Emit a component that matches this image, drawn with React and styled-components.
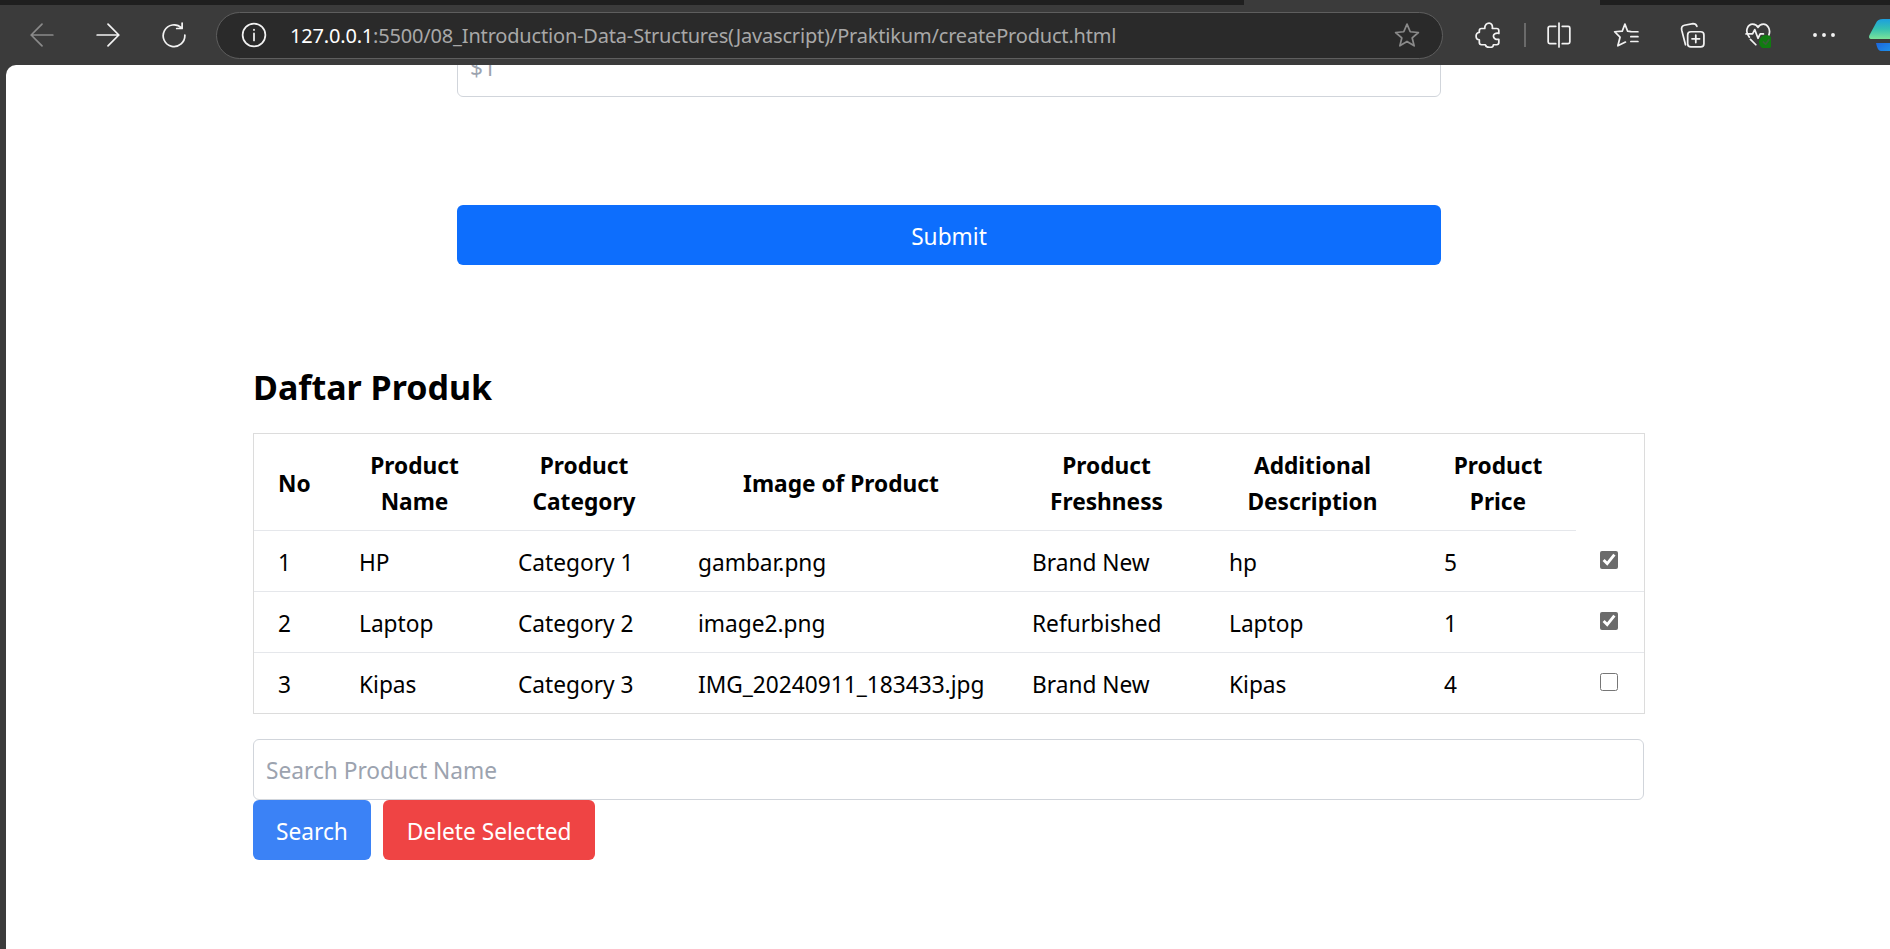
import styled, { createGlobalStyle } from "styled-components";

const GlobalStyle = createGlobalStyle`
  html, body {
    margin: 0;
    height: 100%;
    overflow: hidden;
    background: #3b3b3b;
  }
`;

const products = [
  { no: 1, name: "HP", category: "Category 1", image: "gambar.png", freshness: "Brand New", description: "hp", price: 5, checked: true },
  { no: 2, name: "Laptop", category: "Category 2", image: "image2.png", freshness: "Refurbished", description: "Laptop", price: 1, checked: true },
  { no: 3, name: "Kipas", category: "Category 3", image: "IMG_20240911_183433.jpg", freshness: "Brand New", description: "Kipas", price: 4, checked: false },
];

const columns = [81, 159, 180, 334, 197, 215, 156, 68];

// Browser frame
const Window = styled.div`
  height: 949px;
  display: flex;
  flex-direction: column;
  font-family: "Noto Sans", "Open Sans", sans-serif;
`;

const TabStrip = styled.div`
  height: 5px;
  display: flex;
  background: #1f1f1f;
`;

const ActiveTab = styled.div`
  width: 356px;
  margin-left: 1244px;
  background: #3b3b3b;
`;

const Toolbar = styled.div`
  height: 60px;
  display: flex;
  align-items: center;
  overflow: hidden;
  background: #3b3b3b;
  color: #fff;
`;

const NavIcon = styled.svg`
  width: 26px;
  height: 26px;
  flex: none;
  margin-left: ${(p) => p.$left || 0}px;
  fill: none;
  stroke: ${(p) => (p.$dim ? "#8a8a8a" : "#f2f2f2")};
  stroke-width: 1.6;
  stroke-linecap: round;
  stroke-linejoin: round;
`;

const AddressBar = styled.div`
  width: 1227px;
  height: 47px;
  box-sizing: border-box;
  margin-left: 29px;
  padding: 0 22px 0 24px;
  flex: none;
  display: flex;
  align-items: center;
  border: 1.5px solid #5e5e5e;
  border-radius: 24px;
  background: #2a2a2a;
`;

const Url = styled.span`
  flex: 1;
  margin-left: 23px;
  font-size: 20px;
  letter-spacing: -0.18px;
  white-space: nowrap;
  color: #a8a8a8;
  b {
    font-weight: 400;
    color: #fff;
  }
`;

const Divider = styled.div`
  width: 1.5px;
  height: 24px;
  margin-left: 23px;
  flex: none;
  background: #6a6a6a;
`;

const Badge = styled.circle`
  fill: #107c10;
  stroke: none;
`;

const Dot = styled.circle`
  fill: #f2f2f2;
  stroke: none;
`;

const Logo = styled.svg`
  width: 34px;
  height: 32px;
  flex: none;
  margin-left: 32px;
`;

// Page
const Page = styled.main`
  flex: 1;
  margin-left: 6px;
  overflow: hidden;
  background: #fff;
  border-top-left-radius: 10px;
`;

const Form = styled.section`
  width: 984px;
  margin: -29px 0 0 451px;
`;

const Input = styled.input`
  display: block;
  width: 100%;
  height: 61px;
  box-sizing: border-box;
  padding: 2px 12px 0;
  border: 1.5px solid #d1d5db;
  border-radius: 6px;
  background: #fff;
  font: inherit;
  font-size: 22.7px;
  &::placeholder {
    color: #9ca3af;
    opacity: 1;
  }
`;

const SubmitButton = styled.button`
  display: block;
  width: 100%;
  height: 60px;
  margin-top: 108px;
  padding: 2px 0 0;
  border: 0;
  border-radius: 6px;
  background: #0d6efd;
  color: #fff;
  font: inherit;
  font-size: 22.7px;
`;

const ProductSection = styled.section`
  width: 1391px;
  margin: 95px 0 0 247px;
`;

const Heading = styled.h2`
  margin: 0 0 19px;
  font-size: 34px;
  line-height: 54px;
  font-weight: 700;
  color: #000;
`;

const Table = styled.table`
  width: 100%;
  table-layout: fixed;
  border-collapse: separate;
  border-spacing: 0;
  border: 1.5px solid #dcdcdc;
  border-bottom-width: 1px;
  font-size: 22.7px;
  line-height: 36px;
  color: #000;
`;

const Th = styled.th`
  padding: 14px 24px 10px;
  border-bottom: 1.5px solid #e5e7eb;
  font-weight: 700;
  text-align: center;
  &:first-child {
    text-align: left;
  }
`;

const Td = styled.td`
  padding: 14px 24px 10px;
  border-bottom: 1.5px solid #e5e7eb;
  white-space: nowrap;
  tr:last-child & {
    border-bottom: 0;
  }
`;

const Checkbox = styled.input`
  display: block;
  width: 18px;
  height: 18px;
  margin: -6px 0 0 0;
  accent-color: #6b6b6b;
`;

const SearchInput = styled(Input)`
  margin-top: 25px;
`;

const Actions = styled.div`
  display: flex;
  gap: 12px;
`;

const ActionButton = styled.button`
  height: 60px;
  padding: 2px ${(p) => (p.$danger ? 24 : 23)}px 0;
  border: 0;
  border-radius: 6px;
  background: ${(p) => (p.$danger ? "#ef4444" : "#3b82f6")};
  color: #fff;
  font: inherit;
  font-size: 22.7px;
`;

function App() {
  return (
    <Window>
      <GlobalStyle />
      <TabStrip>
        <ActiveTab />
      </TabStrip>
      <Toolbar>
        <NavIcon $left={29} $dim viewBox="0 0 24 24">
          <path d="M22 12H2M12 2 2 12l10 10" />
        </NavIcon>
        <NavIcon $left={40} viewBox="0 0 24 24">
          <path d="M2 12h20M12 2l10 10-10 10" />
        </NavIcon>
        <NavIcon $left={40} viewBox="0 0 24 24">
          <path d="M19 5.500A10 10 0 1 0 22 12M19.500 1v5h-5" />
        </NavIcon>
        <AddressBar>
          <NavIcon viewBox="0 0 24 24">
            <circle cx="12" cy="12" r="10.500" />
            <path d="M12 10.500V17M12 7v.4" />
          </NavIcon>
          <Url>
            <b>127.0.0.1</b>:5500/08_Introduction-Data-Structures(Javascript)/Praktikum/createProduct.html
          </Url>
          <NavIcon $dim viewBox="0 0 24 24">
            <path d="m12 2 3 7 7.500.7-5.700 5 1.800 7.300-6.600-4-6.600 4L7.200 14.700l-5.700-5L9 9z" />
          </NavIcon>
        </AddressBar>
        <NavIcon $left={32} viewBox="0 0 24 24">
          <path d="M9 6C9 2.500 11 1 13 1c2 0 3.500 2 3 5h4c1 0 2 1 2 2v2.500c-3-.5-5 .5-5 2.500s2 3.500 5 3v3c0 1-1 2-2 2h-3c0 2-2 2.500-3.500 2.500S10 23 9.500 21H6c-1 0-2-1-2-2v-2.500C1.500 16.500 1 14.500 1 13s1-3.500 3-3.500V8c0-1 1-2 2-2z" />
        </NavIcon>
        <Divider />
        <NavIcon $left={20} viewBox="0 0 24 24">
          <path d="M12 1v22M9 4H3.500A1.500 1.500 0 0 0 2 5.500v13A1.500 1.500 0 0 0 3.500 20H9M15 4h5.500A1.500 1.500 0 0 1 22 5.500v13a1.500 1.500 0 0 1-1.500 1.500H15" />
        </NavIcon>
        <NavIcon $left={41} viewBox="0 0 24 24">
          <path d="M11 2l2.500 6.500 3 .3M11 2 8.500 8.500 1.500 9l5 5-2 8 7-3.500M6.500 14M16 9h7M16.500 13.500H23M16.500 18H23" />
        </NavIcon>
        <NavIcon $left={40} viewBox="0 0 24 24">
          <path d="M6 21 2.500 7.500C2 5 3 3.500 5 3l8-1.500c2 0 3 1 3.500 2.500" />
          <rect x="8" y="9" width="15" height="14" rx="3" />
          <path d="M15.500 12v7M12 15.500h7" />
        </NavIcon>
        <NavIcon $left={40} viewBox="0 0 24 24">
          <path d="M4 14C-1 8 3 2 7 2c2 0 4 1 5 3 1-2 3-3 5-3 4 0 7 5 5 10M1 11h6l2-4 3 8 2-4h3M5 16l5 5" />
          <Badge cx="19.400" cy="18.500" r="6.500" />
          <path d="m17 18.500 2 2 3-4" stroke="#3a5f3a" />
        </NavIcon>
        <NavIcon $left={40} viewBox="0 0 24 24">
          <Dot cx="3.700" cy="12" r="1.800" />
          <Dot cx="12" cy="12" r="1.800" />
          <Dot cx="20.300" cy="12" r="1.800" />
        </NavIcon>
        <Logo viewBox="0 0 34 32">
          <defs>
            <linearGradient id="copilotTop" x1="0" y1="0" x2="0" y2="1">
              <stop offset="0" stopColor="#1c9fe0" />
              <stop offset="0.5" stopColor="#35c1b1" />
              <stop offset="1" stopColor="#7be39a" />
            </linearGradient>
            <linearGradient id="copilotBottom" x1="0" y1="0" x2="1" y2="1">
              <stop offset="0" stopColor="#1b4fd8" />
              <stop offset="1" stopColor="#1fa3ee" />
            </linearGradient>
          </defs>
          <path d="M14 0h20v20H3C0 20-.5 18.500.5 16L7 4c1-2.500 3.500-4 7-4z" fill="url(#copilotTop)" />
          <path d="M7 24h14l3-7 10-2v17H12C9 32 8 28 7 24z" fill="url(#copilotBottom)" />
        </Logo>
      </Toolbar>
      <Page>
        <Form>
          <Input placeholder="$1" readOnly />
          <SubmitButton>Submit</SubmitButton>
        </Form>
        <ProductSection>
          <Heading>Daftar Produk</Heading>
          <Table>
            <colgroup>
              {columns.map((width, i) => (
                <col key={i} style={{ width }} />
              ))}
            </colgroup>
            <thead>
              <tr>
                <Th>No</Th>
                <Th>Product Name</Th>
                <Th>Product Category</Th>
                <Th>Image of Product</Th>
                <Th>Product Freshness</Th>
                <Th>Additional Description</Th>
                <Th>Product Price</Th>
              </tr>
            </thead>
            <tbody>
              {products.map((product) => (
                <tr key={product.no}>
                  <Td>{product.no}</Td>
                  <Td>{product.name}</Td>
                  <Td>{product.category}</Td>
                  <Td>{product.image}</Td>
                  <Td>{product.freshness}</Td>
                  <Td>{product.description}</Td>
                  <Td>{product.price}</Td>
                  <Td>
                    <Checkbox type="checkbox" defaultChecked={product.checked} />
                  </Td>
                </tr>
              ))}
            </tbody>
          </Table>
          <SearchInput placeholder="Search Product Name" readOnly />
          <Actions>
            <ActionButton>Search</ActionButton>
            <ActionButton $danger>Delete Selected</ActionButton>
          </Actions>
        </ProductSection>
      </Page>
    </Window>
  );
}

export default App;
